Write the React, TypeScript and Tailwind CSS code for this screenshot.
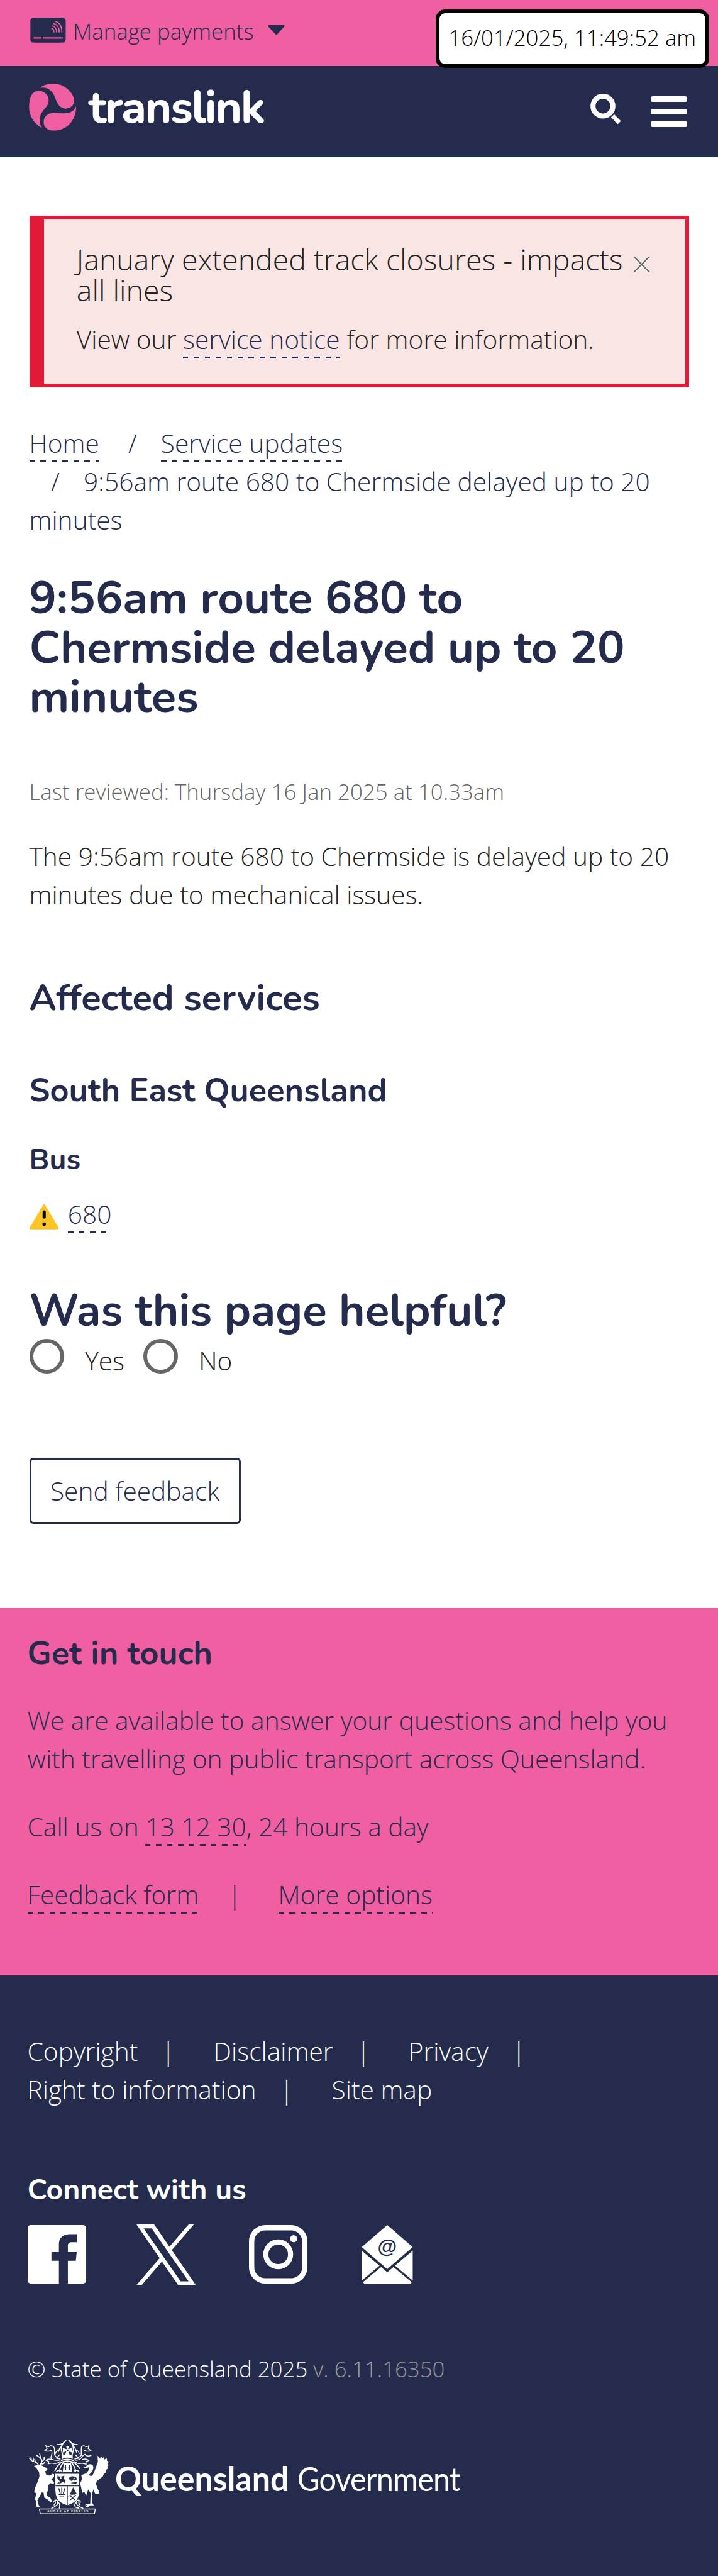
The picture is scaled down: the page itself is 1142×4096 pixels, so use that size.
import React from 'react';

const underline =
  "inline-block h-[61px] bg-[repeating-linear-gradient(90deg,#252b4c_0_8.7px,transparent_8.7px_17.45px)] bg-[length:100%_3px] bg-bottom bg-no-repeat text-[#252b4c]";

function DashedLink({ children }: { children: React.ReactNode }) {
  return <a href="#" className={underline}>{children}</a>;
}

function CardIcon() {
  return (
    <svg viewBox="28 26 176 124" className="h-[40px] w-[56.8px] shrink-0" fill="none" strokeLinecap="round">
      <rect x="29" y="27" width="174" height="122" rx="15" fill="#252b4c" />
      <g stroke="#f05fa1" strokeWidth="5.5">
        <path d="M134 79C141 82 145 88 145 97" />
        <path d="M138 67C150 70 158 82 158 97" />
        <path d="M144 55C161 60 171 76 171 97" />
        <path d="M151 44C173 50 184 70 184 97" />
        <path d="M48 126.500H81M93 126.500H186" strokeWidth="7" />
      </g>
    </svg>
  );
}

function TranslinkMark() {
  return (
    <svg viewBox="20 345 240 240" className="h-[77.5px] w-[77.5px] shrink-0" fill="#f05fa1">
      <path d="M79 371C98 355 125 350 148 351C195 354 232 385 246 425C249 455 232 474 203 474C172 473 160 444 150 415C139 385 115 366 79 371Z" />
      <path d="M87 569C50 548 24 512 24 467C24 440 30 415 38 404C50 388 68 385 85 388C110 394 122 418 120 438C117 470 85 480 78 515C74 535 77 552 87 569Z" />
      <path d="M255 461C258 500 240 540 210 562C188 578 165 583 140 582C115 582 97 565 96 543C95 515 112 498 140 496C180 493 190 503 222 494C240 488 250 476 255 461Z" />
    </svg>
  );
}

function SearchIcon() {
  return (
    <svg viewBox="810 432 152 152" className="h-[49px] w-[49px]" fill="none" stroke="#fff">
      <circle cx="872" cy="493" r="49" strokeWidth="25" />
      <path d="M920 541L945 567" strokeWidth="21" />
      <rect x="934" y="556" width="22" height="22" rx="3" transform="rotate(45 945 567)" fill="#fff" stroke="none" />
    </svg>
  );
}

function WarningIcon() {
  return (
    <svg viewBox="0 0 48 41" className="mt-[15px] h-[39.700px] w-[46.500px] shrink-0">
      <path d="M24 2L46 39H2Z" fill="#ffc425" stroke="#ffc425" strokeWidth="4" strokeLinejoin="round" />
      <path d="M24 12.500V21" stroke="#000" strokeWidth="5.200" strokeLinecap="round" />
      <circle cx="24" cy="32.500" r="2.900" />
    </svg>
  );
}

function FacebookIcon() {
  return (
    <svg viewBox="0 0 96 96" className="h-[93px] w-[93px]">
      <rect width="96" height="96" rx="5" fill="#fff" />
      <path fill="#252b4c" d="M51.300 31C51.300 20 59 15 71 15H81V28H73.500C68 28 66 30 66 34V44.500H80.500L79 58.500H66V96H51.300V58.500H39V44.500H51.300Z" />
    </svg>
  );
}

function XIcon() {
  return (
    <svg viewBox="0 0 1200 1227" className="h-[96.500px] w-[94.500px]" fill="#fff">
      <path d="M714.163 519.284L1160.890 0H1055.030L667.137 450.887L357.328 0H0L468.492 681.821L0 1226.370H105.866L515.491 750.218L842.672 1226.370H1200L714.137 519.284H714.163ZM569.165 687.828L521.697 619.934L144.011 79.694H306.615L611.412 515.685L658.880 583.579L1055.080 1150.300H892.476L569.165 687.854V687.828Z" />
    </svg>
  );
}

function InstagramIcon() {
  return (
    <svg viewBox="0 0 96 96" className="h-[93px] w-[93px]" fill="none" stroke="#fff">
      <rect x="4.350" y="4.350" width="87.300" height="87.300" rx="22.500" strokeWidth="8.700" />
      <circle cx="48" cy="48" r="20.300" strokeWidth="8.400" />
      <circle cx="73.400" cy="22.400" r="5.800" fill="#fff" stroke="none" />
    </svg>
  );
}

function MailIcon() {
  return (
    <svg viewBox="0 0 84.500 96" className="h-[93px] w-[82px]" fill="#fff">
      <path d="M42.200 0L84 36L42.200 72.300L0.400 36Z" />
      <path d="M0.400 42L29.500 66.700L0.400 91Z" />
      <path d="M84 42L54.900 66.700L84 91Z" />
      <path d="M32 69L42.200 77.300L52.400 69L82.500 94L80 96H4.400L1.900 94Z" />
      <text x="42.200" y="46" textAnchor="middle" fontSize="32.500" fontWeight="700" fontFamily="Liberation Sans, sans-serif" fill="#252b4c">@</text>
    </svg>
  );
}

function CoatOfArms() {
  return (
    <svg viewBox="54 83 394 366" className="h-[118.200px] w-[127.200px] shrink-0" fill="#fff" strokeLinecap="round" strokeLinejoin="round">
      {/* mantling and crest */}
      <g fill="none" stroke="#fff" strokeWidth="4.500">
        <path d="M236 85Q222 94 217 108Q210 128 218 146Q222 156 220 172" strokeWidth="6" />
        <path d="M251 85Q265 94 270 108Q277 128 269 146Q265 156 267 172" strokeWidth="6" />
        <path d="M220 100Q206 106 194 104M267 100Q280 106 292 104M214 112Q202 124 198 142M272 112Q285 124 288 142" />
        <path d="M137 110Q150 120 162 110Q180 112 180 128V152Q182 162 196 170M137 110L144 124L132 134Q152 142 164 132Q170 140 166 158Q158 170 168 178Q184 184 202 182" />
        <path d="M350 110Q337 120 325 110Q310 112 312 128V158Q304 166 292 170M350 110L346 124L360 134Q340 142 326 132M360 158Q338 166 330 152Q318 158 312 170Q304 180 286 182" />
        <path d="M184 150Q190 130 204 136M302 150Q298 130 284 136M204 156L190 172L208 176M284 156L298 172L280 176" />
        <path d="M168 178Q150 172 138 182L152 188L148 200Q166 194 178 198Q194 200 208 188M318 178Q338 172 350 184L334 188L336 202Q320 194 306 198Q292 200 280 188" />
        <path d="M218 190Q196 204 182 234M226 192Q208 210 204 238M270 190Q292 204 304 222M262 192Q280 210 284 238M190 238Q204 226 214 236M298 236Q284 226 276 236" strokeWidth="5.500" />
        <path d="M214 182Q243 172 272 182M216 191Q243 181 270 191" strokeWidth="6" />
      </g>
      <path d="M238 114H250L247 128L266 122V144L250 138L254 154H233L238 138L221 144V122L241 128ZM221 158Q244 150 267 158L270 174Q244 164 217 174Z" />
      <circle cx="244" cy="133" r="4" fill="#252b4c" />
      <path d="M226 198Q244 190 262 198L268 240H220Z" />
      <path d="M235 208V230M228 215H242M254 208V230M247 215H261" stroke="#252b4c" strokeWidth="3.500" />
      {/* red deer */}
      <g fill="none" stroke="#fff" strokeWidth="5">
        <path d="M100 204Q94 192 78 188Q62 184 57 172M66 182L64 166M77 188L75 170M86 190L82 178" />
        <path d="M108 204Q120 196 116 178Q110 168 92 158M116 182Q110 164 107 150M120 186Q132 180 129 166M116 200Q130 202 130 190" />
      </g>
      <path d="M79 211L98 204L114 206L126 212L144 222L145 230L134 236L138 252L156 258L172 248L178 252V264L164 276L178 290L176 300L158 294L148 308L150 324L142 344L144 358L160 368L168 384L160 388L150 378L130 366L126 342L118 340L106 362L96 378L101 400L108 414H94L88 404V380L84 374L90 344L80 340L84 318L96 290L106 262L104 240L92 222Z" />
      {/* brolga */}
      <path d="M316 222Q334 216 344 204Q356 198 368 206Q376 220 366 236L350 254Q356 262 366 258Q374 246 382 222L394 190L392 160L400 166L404 176L408 162L416 172L424 166L426 178L438 172L438 184L447 190L442 198L447 206L440 212L443 222L436 228L434 242L424 248L418 262L402 274L388 286L384 298L392 320L402 344L392 348L380 346L372 326L366 342L366 392L374 404H356L344 414L332 410L344 400L330 404L336 396H356L358 344L346 326L336 356L326 336L316 344L312 318L306 296L316 276L312 256Q322 250 336 246Q352 230 352 216Q336 220 316 222Z" />
      {/* shield */}
      <path d="M181 246H304V312Q306 360 292 378Q276 396 243 406Q208 396 194 376Q180 354 182 312Z" stroke="#252b4c" strokeWidth="5" />
      <g fill="#252b4c" stroke="#252b4c">
        <path d="M196 258Q204 266 218 262L228 258L226 274L234 282L230 294L222 288L204 298Q212 286 200 280Q192 270 196 258ZM202 290L194 296H206Z" />
        <path d="M250 270Q260 258 274 262Q290 264 290 276L280 282L272 276L266 284L256 280ZM262 294Q280 286 292 290L286 298Z" />
        <path d="M187 308H301M243 308V402" strokeWidth="4" />
        <path d="M202 322L208 344M216 318V344M230 322L224 344M203 350H229M206 358H226" strokeWidth="5" />
        <path d="M258 346L272 316L288 346Z" />
        <path d="M248 362Q256 350 272 350Q286 352 292 360" fill="none" strokeWidth="3" />
        <path d="M259 358L279 376M279 358L259 376" strokeWidth="4.500" />
      </g>
      <g fill="#fff" stroke="#252b4c" strokeWidth="1">
        <circle cx="211" cy="270" r="5" />
        <circle cx="277" cy="272" r="4" />
      </g>
      {/* scroll and motto */}
      <g fill="none" stroke="#fff" strokeWidth="5">
        <path d="M176 388Q182 374 194 380Q200 392 192 402Q182 412 166 418M184 386Q186 396 178 402M198 388Q210 400 204 418" />
        <path d="M308 388Q302 374 290 380Q284 392 292 402Q302 412 320 418M300 386Q298 396 306 402M286 388Q276 400 282 412Q290 416 300 418" />
        <path d="M106 422H381L377 446H110Z" strokeWidth="4.500" />
      </g>
      <text x="245" y="440" textAnchor="middle" fontSize="14" fontWeight="700" fontFamily="Liberation Sans, sans-serif" textLength="200" lengthAdjust="spacing">AUDAX AT FIDELIS</text>
    </svg>
  );
}

function Bar() {
  return <span className="pr-[60.500px] pl-[37.500px]">|</span>;
}

export default function App() {
  return (
    <div className="relative flex min-h-[4096px] w-[1142px] flex-col bg-white font-['Open_Sans',sans-serif] text-[40.680px] leading-[61px] font-light text-[#222]">
      <div className="flex h-[104.600px] items-start bg-[#f05fa1] pt-[27.800px] pl-[47.800px] text-[34.870px] text-[#252b4c]">
        <CardIcon />
        <span className="-mt-[3.500px] pr-[22.500px] pl-[11.500px] leading-[52px]">Manage payments</span>
        <svg viewBox="0 0 28 16" className="mt-[12.500px] h-[15.500px] w-[27px]" fill="#252b4c">
          <path d="M1.500 0H26.500Q28.500 0.800 27 2.500L16 14.500Q14 16.500 12 14.500L1 2.500Q-0.500 0.800 1.500 0Z" />
        </svg>
      </div>
      <div className="absolute top-[14.500px] left-[692.500px] flex h-[93px] w-[435.500px] items-center justify-center rounded-[15px] border-[6px] border-black bg-white pb-[3px] text-[34.870px] whitespace-nowrap text-black">
        16/01/2025, 11:49:52 am
      </div>

      <header className="flex h-[145.200px] items-start justify-between bg-[#252b4c] pt-[26px] pr-[50.500px] pl-[45.200px]">
        <div className="flex gap-[18.500px]">
          <TranslinkMark />
          <span className="font-['Nunito',sans-serif] text-[72px] leading-[80px] font-bold tracking-[-1.700px] text-white [-webkit-text-stroke:0.800px_white]">translink</span>
        </div>
        <div className="flex gap-[48px] pt-[18.500px]">
          <SearchIcon />
          <div className="flex flex-col gap-[10.300px] pt-[3.900px]">
            <i className="h-[9.400px] w-[55.200px] rounded-[1.500px] bg-white" />
            <i className="h-[9.400px] w-[55.200px] rounded-[1.500px] bg-white" />
            <i className="h-[9.400px] w-[55.200px] rounded-[1.500px] bg-white" />
          </div>
        </div>
      </header>

      <main className="px-[46.500px] pt-[93px] pb-[133.600px] text-[#222]">
        <section className="flex h-[273px] border-[6px] border-l-[23px] border-[#e31a37] bg-[#f9e5e3] pt-[39.500px] pl-[52.300px]">
          <div className="flex w-[874px] flex-col gap-[23px]">
            <h2 className="text-[46.490px] leading-[48.900px]">January extended track closures - impacts all lines</h2>
            <p>View our <DashedLink>service notice</DashedLink> for more information.</p>
          </div>
          <svg viewBox="0 0 27 28" className="mt-[18.500px] ml-[11.500px] h-[28px] w-[27px]" fill="none">
            <path d="M1 3L26 28M26 3L1 28" stroke="#fff" strokeWidth="2" />
            <path d="M1 1L26 26M26 1L1 26" stroke="#666" strokeWidth="2" />
          </svg>
        </section>

        <nav className="mt-[58.700px] text-[#252b4c]">
          <div className="flex">
            <DashedLink>Home</DashedLink>
            <span className="pr-[38px] pl-[46px]">/</span>
            <DashedLink>Service updates</DashedLink>
          </div>
          <p><span className="pr-[38.200px] pl-[34.500px]">/</span>9:56am route 680 to Chermside delayed up to 20 minutes</p>
        </nav>

        <h1 className="mt-[55.600px] font-['Nunito',sans-serif] text-[72.640px] leading-[78.500px] font-bold text-[#252b4c]">
          9:56am route 680 to<br />Chermside delayed up to 20<br />minutes
        </h1>
        <p className="mt-[84.500px] text-[34.870px] leading-[52px] text-[#666]">Last reviewed: Thursday 16 Jan 2025 at 10.33am</p>
        <p className="mt-[45.800px]">The 9:56am route 680 to Chermside is delayed up to 20 minutes due to mechanical issues.</p>

        <div className="pt-[99px] font-['Nunito',sans-serif] font-bold text-[#252b4c]">
          <h2 className="text-[58.100px] leading-[70px]">Affected services</h2>
          <h3 className="pt-[80.300px] text-[52.300px] leading-[64px]">South East Queensland</h3>
          <h4 className="pt-[49.600px] text-[46.490px] leading-[56px]">Bus</h4>
        </div>
        <div className="mt-[28.600px] flex gap-[14.800px]">
          <WarningIcon />
          <DashedLink>680</DashedLink>
        </div>

        <h2 className="mt-[84.200px] font-['Nunito',sans-serif] text-[71.200px] leading-[78px] font-bold text-[#252b4c]">Was this page helpful?</h2>
        <div className="flex h-[69.500px] items-start pt-[5.700px]">
          <label className="flex w-[181.100px] gap-[33.500px]">
            <span className="h-[55.200px] w-[55.200px] rounded-full border-[6px] border-[#666]" />
            <span className="pt-[3.400px]">Yes</span>
          </label>
          <label className="flex gap-[33.500px]">
            <span className="h-[55.200px] w-[55.200px] rounded-full border-[6px] border-[#666]" />
            <span className="pt-[3.400px]">No</span>
          </label>
        </div>
        <button className="mt-[125.200px] flex h-[104.700px] w-[336px] items-center justify-center rounded-[6px] border-[3px] border-[#252b4c] pb-[1px] text-[#252b4c]">Send feedback</button>
      </main>

      <section className="h-[584px] bg-[#f05fa1] pt-[40.800px] pl-[43.600px] text-[#252b4c]">
        <h3 className="font-['Nunito',sans-serif] text-[52.300px] leading-[64px] font-bold">Get in touch</h3>
        <div className="flex w-[1040px] flex-col gap-[46.700px] pt-[43.900px]">
          <p>We are available to answer your questions and help you with travelling on public transport across Queensland.</p>
          <p>Call us on <DashedLink>13 12 30</DashedLink>, 24 hours a day</p>
          <div className="flex">
            <DashedLink>Feedback form</DashedLink>
            <span className="pr-[58.300px] pl-[46.200px]">|</span>
            <DashedLink>More options</DashedLink>
          </div>
        </div>
      </section>

      <footer className="flex-1 bg-[#252b4c] pt-[90.900px] pl-[43.600px] text-white">
        <div className="flex">Copyright<Bar />Disclaimer<Bar />Privacy<Bar /></div>
        <div className="flex">Right to information<Bar />Site map</div>
        <h4 className="pt-[101px] font-['Nunito',sans-serif] text-[46.490px] leading-[56px] font-bold">Connect with us</h4>
        <div className="mt-[27.900px] flex h-[93px] items-center">
          <FacebookIcon />
          <span className="pr-[84.300px] pl-[80.300px]"><XIcon /></span>
          <InstagramIcon />
          <span className="pl-[86.300px]"><MailIcon /></span>
        </div>
        <p className="mt-[109.400px] text-[34.870px] leading-[52px]">© State of Queensland 2025 <span className="text-[#999]">v. 6.11.16350</span></p>
        <div className="flex items-start gap-[9px] pt-[87.300px] pl-[2.900px] font-['Lato',sans-serif] text-[53px] leading-[60px]">
          <CoatOfArms />
          <div className="flex gap-[8px] pt-[31px]">
            <span className="origin-left scale-x-[0.980] font-bold">Queensland</span>
            <span className="origin-left scale-x-[0.917] font-normal tracking-[-0.900px]">Government</span>
          </div>
        </div>
      </footer>
    </div>
  );
}
